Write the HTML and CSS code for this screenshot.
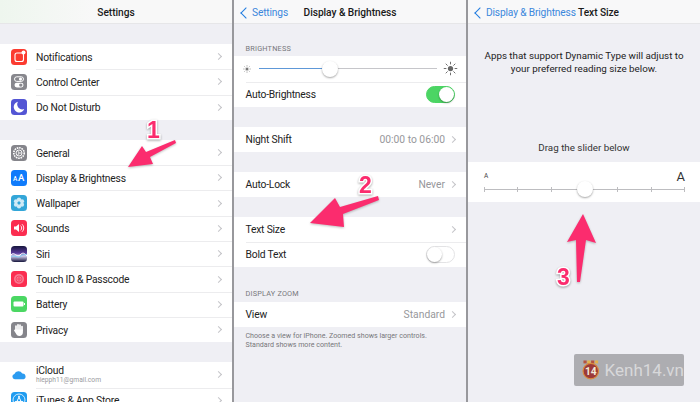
FILE: index.html
```html
<!DOCTYPE html>
<html lang="en">
<head>
	<title>Text Size</title>
	<meta charset="utf-8">
	<link rel="stylesheet" href="styles.css">
</head>
<body>

<!-- wrap -->
<div id="p_wrapper">

	<!-- settings -->
	<div class="screen">
		<div class="nav nav-tint"><span class="nav-title">Settings</span></div>
		<div class="gap"></div>
		<ul class="group">
			<li class="row"><svg class="ico" viewBox="0 0 16 16"><rect width="16" height="16" rx="3.5" fill="#fb3b30"/><rect x="4" y="4" width="8.5" height="8.5" rx="2" fill="none" stroke="#fff" stroke-width="1.1"/><circle cx="12.5" cy="3.6" r="2" fill="#fff"/></svg><span class="label">Notifications</span><i class="chev"></i></li>
			<li class="row"><svg class="ico" viewBox="0 0 16 16"><rect width="16" height="16" rx="3.5" fill="#87878d"/><rect x="3.5" y="2.8" width="9" height="4.6" rx="2.3" fill="none" stroke="#fff"/><circle cx="9.5" cy="5.1" r="1.6" fill="#fff"/><rect x="3.5" y="8.8" width="9" height="4.6" rx="2.3" fill="#fff"/><circle cx="9.8" cy="11.1" r="1.7" fill="#87878d"/></svg><span class="label">Control Center</span><i class="chev"></i></li>
			<li class="row"><svg class="ico" viewBox="0 0 16 16"><rect width="16" height="16" rx="3.5" fill="#5355d4"/><path d="M7 2.8A5.4 5.4 0 1 0 13.2 10 5 5 0 0 1 7 2.8Z" fill="#fff"/></svg><span class="label">Do Not Disturb</span><i class="chev"></i></li>
		</ul>
		<div class="gap"></div>
		<ul class="group">
			<li class="row"><svg class="ico" viewBox="0 0 16 16"><rect width="16" height="16" rx="3.5" fill="#85858b"/><circle cx="8" cy="8" r="5.2" fill="none" stroke="#fff" stroke-width="1.6" stroke-dasharray="1.6 .8"/><circle cx="8" cy="8" r="3" fill="none" stroke="#fff" stroke-width=".9"/><path d="M8 8 10.8 8M8 8 6.6 5.6M8 8 6.6 10.4" stroke="#fff" stroke-width=".8"/></svg><span class="label">General</span><i class="chev"></i></li>
			<li class="row"><svg class="ico" viewBox="0 0 16 16"><rect width="16" height="16" rx="3.5" fill="#0f7bfb"/><text class="ico-aa" x="2" y="11" font-size="6.5">A</text><text class="ico-aa" x="7" y="11" font-size="9.5">A</text></svg><span class="label">Display &amp; Brightness</span><i class="chev"></i></li>
			<li class="row"><svg class="ico" viewBox="0 0 16 16"><rect width="16" height="16" rx="3.5" fill="#33a6d8"/><g fill="#cfeaf6"><circle cx="8" cy="4.6" r="2.1"/><circle cx="8" cy="11.4" r="2.1"/><circle cx="5" cy="6.3" r="2.1"/><circle cx="11" cy="6.3" r="2.1"/><circle cx="5" cy="9.7" r="2.1"/><circle cx="11" cy="9.7" r="2.1"/></g><circle cx="8" cy="8" r="1.3" fill="#33a6d8"/></svg><span class="label">Wallpaper</span><i class="chev"></i></li>
			<li class="row"><svg class="ico" viewBox="0 0 16 16"><rect width="16" height="16" rx="3.5" fill="#fb2d50"/><path d="M3 6.4H5L8 4V12L5 9.6H3Z" fill="#fff"/><path d="M9.5 5.6A3 3 0 0 1 9.5 10.4M11 4.2A5 5 0 0 1 11 11.8" fill="none" stroke="#fff" stroke-width=".9"/></svg><span class="label">Sounds</span><i class="chev"></i></li>
			<li class="row"><svg class="ico" viewBox="0 0 16 16"><defs><linearGradient id="siriBg" x1="0" y1="0" x2="0" y2="1"><stop offset="0" stop-color="#15153c"/><stop offset=".45" stop-color="#5b3c9c"/><stop offset=".62" stop-color="#d9d2f2"/><stop offset="1" stop-color="#15153c"/></linearGradient></defs><rect width="16" height="16" rx="3.5" fill="url(#siriBg)"/><path d="M0 9C3 5 6 12 9 9S13 7 16 10" fill="none" stroke="#fff" stroke-width="1"/><path d="M0 11C4 8 6 13 10 10S14 10 16 8" fill="none" stroke="#7fd4f5" stroke-width="1"/></svg><span class="label">Siri</span><i class="chev"></i></li>
			<li class="row"><svg class="ico" viewBox="0 0 16 16"><rect width="16" height="16" rx="3.5" fill="#fb2d50"/><circle cx="8" cy="8" r="5" fill="#f77b92"/><circle cx="8" cy="8" r="3" fill="none" stroke="#fb2d50" stroke-width=".7"/><circle cx="8" cy="8" r="1.2" fill="none" stroke="#fb2d50" stroke-width=".7"/></svg><span class="label">Touch ID &amp; Passcode</span><i class="chev"></i></li>
			<li class="row"><svg class="ico" viewBox="0 0 16 16"><rect width="16" height="16" rx="3.5" fill="#4bd763"/><rect x="2.5" y="5.5" width="10" height="5" rx="1" fill="#fff"/><rect x="13" y="7" width="1" height="2" fill="#fff"/></svg><span class="label">Battery</span><i class="chev"></i></li>
			<li class="row"><svg class="ico" viewBox="0 0 16 16"><rect width="16" height="16" rx="3.5" fill="#85858b"/><path d="M5 8V4.2M7 7.5V2.8M9 7.5V3.2M11 8.5V4.5" stroke="#fff" stroke-width="1.7" stroke-linecap="round"/><path d="M4.2 7.5H11.9V10.5C11.9 12.8 10.5 14 8.4 14 6.4 14 5.6 12.8 4.6 11L3 8.6C3 8 3.8 7.5 4.2 7.5Z" fill="#fff"/></svg><span class="label">Privacy</span><i class="chev"></i></li>
		</ul>
		<div class="gap"></div>
		<ul class="group">
			<li class="row"><svg class="ico" viewBox="0 0 16 16"><path d="M3.8 12.2A2.7 2.7 0 0 1 3.4 6.9 4.4 4.4 0 0 1 11.3 6.4 3 3 0 0 1 12.6 12.2Z" fill="#2c9bf0"/></svg><div class="label"><div class="label-two">iCloud</div><div class="sub">hiepph11@gmail.com</div></div><i class="chev"></i></li>
			<li class="row"><svg class="ico" viewBox="0 0 16 16"><rect width="16" height="16" rx="3.5" fill="#1f9cf0"/><circle cx="8" cy="8" r="6" fill="none" stroke="#fff" stroke-width=".8"/><path d="M8.6 3.8 5 11.5M7.4 3.8 11 11.5M3.8 9.6H12.2" stroke="#fff" stroke-width="1"/></svg><span class="label">iTunes &amp; App Store</span><i class="chev"></i></li>
		</ul>
	</div>

	<div class="divider"></div>

	<!-- display & brightness -->
	<div class="screen">
		<div class="nav">
			<span class="back"><i class="back-arrow"></i>Settings</span>
			<span class="nav-title">Display &amp; Brightness</span>
		</div>
		<div class="group-head head-first">BRIGHTNESS</div>
		<ul class="group">
			<li class="row row-inset bright">
				<svg class="sun" viewBox="0 0 16 16"><circle cx="8" cy="8" r="2.4" fill="#777"/><path d="M8 2V4M8 12V14M2 8H4M12 8H14M3.8 3.8 5.2 5.2M10.8 10.8 12.2 12.2M3.8 12.2 5.2 10.8M10.8 5.2 12.2 3.8" stroke="#777" stroke-width="1"/></svg>
				<div class="track"><div class="track-on"></div><div class="track-off"></div><span class="thumb"></span></div>
				<svg class="sun sun-big" viewBox="0 0 16 16"><circle cx="8" cy="8" r="2.8" fill="#666"/><path d="M8 .8V3.6M8 12.4V15.2M.8 8H3.6M12.4 8H15.2M2.9 2.9 4.9 4.9M11.1 11.1 13.1 13.1M2.9 13.1 4.9 11.1M11.1 4.9 13.1 2.9" stroke="#666" stroke-width="1"/></svg>
			</li>
			<li class="row row-inset"><span class="label">Auto-Brightness</span><span class="switch switch-on"><span class="knob"></span></span></li>
		</ul>
		<div class="gap"></div>
		<ul class="group">
			<li class="row row-inset"><span class="label">Night Shift</span><span class="value">00:00 to 06:00</span><i class="chev"></i></li>
		</ul>
		<div class="gap"></div>
		<ul class="group">
			<li class="row row-inset"><span class="label">Auto-Lock</span><span class="value">Never</span><i class="chev"></i></li>
		</ul>
		<div class="gap"></div>
		<ul class="group">
			<li class="row row-inset"><span class="label">Text Size</span><i class="chev"></i></li>
			<li class="row row-inset"><span class="label">Bold Text</span><span class="switch"><span class="knob"></span></span></li>
		</ul>
		<div class="group-head head-zoom">DISPLAY ZOOM</div>
		<ul class="group">
			<li class="row row-inset"><span class="label">View</span><span class="value">Standard</span><i class="chev"></i></li>
		</ul>
		<p class="foot">Choose a view for iPhone. Zoomed shows larger controls.<br>Standard shows more content.</p>
	</div>

	<div class="divider"></div>

	<!-- text size -->
	<div class="screen">
		<div class="nav">
			<span class="back back-long"><i class="back-arrow"></i>Display &amp; Brightness</span>
			<span class="nav-title title-side">Text Size</span>
		</div>
		<p class="intro">Apps that support Dynamic Type will adjust to<br>your preferred reading size below.</p>
		<p class="drag">Drag the slider below</p>
		<div class="sizer">
			<div class="sizer-ends"><span class="a-small">A</span><span class="a-big">A</span></div>
			<div class="ticks">
				<i></i><i></i><i></i><i></i><i></i><i></i><i></i>
				<span class="thumb thumb-mid"></span>
			</div>
		</div>
	</div>

</div>
<!-- //wrap -->

<!-- arrows and numbers drawn over the screens -->
<svg class="arrows" viewBox="0 0 700 402">
	<path d="M128 167 142 146 146 152 175 140 176 143 150 157 153 164Z"/>
	<path d="M310 223 335 198 340 207 378 196 379 200 343 214 344 227Z"/>
	<path d="M583 214 596 243 586 240 580 282 577 282 576 240 567 242Z"/>
</svg>
<span class="num num-1">1</span>
<span class="num num-2">2</span>
<span class="num num-3">3</span>

<div class="mark">
	<svg class="mark-logo" viewBox="0 0 24 26">
		<g fill="#b5533f"><rect x="2" y="0" width="4.4" height="4"/><rect x="12.4" y="0" width="4.4" height="4"/></g>
		<g fill="#e3b34c"><rect x="7.2" y="0" width="4.4" height="4"/><rect x="17.6" y="0" width="4.4" height="4"/></g>
		<circle cx="12" cy="14.5" r="10.6" fill="#9c3a3a" stroke="#d98b3c" stroke-width="1.6"/>
		<text x="12" y="20" text-anchor="middle" class="mark-num">14</text>
	</svg>
	<span class="mark-text">Kenh14.vn</span>
</div>

</body>
</html>
```

FILE: styles.css
```css
*{padding: 0; margin:0; border: 0; box-sizing: border-box;}
html, body {width: 700px;height: 402px;overflow: hidden;}
body {position: relative;font-family: "Roboto", "Liberation Sans", sans-serif;color: #222;background: #efeff4;}
ul {list-style: none;}

#p_wrapper {display: flex;width: 700px;height: 402px;}
.screen {flex: 0 0 232px;height: 402px;overflow: hidden;background: #efeff4;}
.divider {flex: 0 0 2px;background: #98989c;}

.nav {display: flex;align-items: center;justify-content: center;position: relative;height: 24px;padding-top: 1px;background: #f8f8f9;border-bottom: 1px solid #e6e6e8;}
.nav-tint {background: linear-gradient(90deg, #eef6ee, #f8f8f8 40%);}
.nav-title {font-size: 10.2px;font-weight: 500;letter-spacing: -.05px;color: #1a1a1a;}
.title-side {margin-left: 29px;}
.back {position: absolute;left: 5px;top: 1px;display: flex;align-items: center;height: 23px;font-size: 10.2px;letter-spacing: -.15px;color: #3b87dc;}
.back-arrow {width: 8px;height: 8px;margin-right: 2px;margin-left: 3px;border-left: 1.7px solid #1f7be0;border-bottom: 1.7px solid #1f7be0;transform: rotate(45deg);}

.gap {height: 20px;}
.group {background: #fff;}
.row {display: flex;align-items: center;position: relative;height: 25.3px;padding-right: 10px;font-size: 10.3px;letter-spacing: -.2px;background: #fff;}
.row + .row:before {content: '';position: absolute;left: 36px;right: 0;top: 0;height: 1px;background: #ececee;}
.row-inset {height: 25px;padding-left: 11.5px;}
.row-inset + .row-inset:before {left: 12px;}

.ico {flex: 0 0 16px;width: 16px;height: 16px;margin: 0 9px 0 11px;}
.ico + .label {padding-top: 1px;}
.ico-aa {fill: #fff;font-family: "Roboto", sans-serif;font-weight: 500;}
.label {flex: 1;white-space: nowrap;}
.label-two {line-height: 11px;margin-top: -1px;}
.sub {font-size: 6.7px;line-height: 8px;letter-spacing: 0;color: #9a9a9e;}
.value {color: #97979b;margin-right: 5px;letter-spacing: 0;}
.chev {flex: 0 0 5px;width: 5px;height: 5px;margin-right: 1px;border-top: 1px solid #c4c4c8;border-right: 1px solid #c4c4c8;transform: rotate(45deg);}

.group-head {font-size: 7.3px;color: #77777b;padding-left: 11.5px;letter-spacing: .2px;}
.head-first {height: 32px;padding-top: 20px;}
.head-zoom {height: 35.5px;padding-top: 22px;}
.foot {padding: 3.5px 11.5px 0;font-size: 7.1px;line-height: 9px;color: #77777b;}

.row.bright {height: 25.5px;padding-right: 8px;padding-left: 8px;}
.sun {flex: 0 0 10px;width: 10px;height: 10px;}
.sun-big {flex: 0 0 15px;width: 15px;height: 15px;}
.track {flex: 1;display: flex;align-items: center;position: relative;height: 14px;margin: 0 6px 0 7px;}
.track-on {width: 36%;height: 1px;background: #5e98d8;}
.track-off {flex: 1;height: 1px;background: #c6c6ca;}
.thumb {position: absolute;left: 35.5%;top: -1px;width: 16px;height: 16px;border-radius: 50%;background: #fff;box-shadow: 0 1px 2px rgba(0,0,0,.35);}

.switch {display: block;position: relative;width: 29px;height: 17px;margin-right: 1px;border-radius: 9px;background: #fff;border: 1px solid #e3e3e5;}
.switch-on {background: #4cd564;border-color: #4cd564;}
.knob {position: absolute;left: 0;top: 0;width: 15px;height: 15px;border-radius: 50%;background: #fff;box-shadow: 0 1px 2px rgba(0,0,0,.35);}
.switch-on .knob {left: 12px;}

.intro {padding-top: 26px;font-size: 9.8px;line-height: 12.5px;text-align: center;color: #222;}
.drag {padding-top: 66px;font-size: 9.8px;line-height: 14px;text-align: center;color: #333;}
.sizer {height: 40px;margin-top: 7px;padding: 6px 15px 0 16px;background: #fff;}
.sizer-ends {display: flex;align-items: center;justify-content: space-between;height: 16px;}
.a-small {font-size: 6.5px;color: #444;}
.a-big {font-size: 13px;color: #333;}
.ticks {display: flex;justify-content: space-between;align-items: center;position: relative;height: 6px;margin-top: 2px;background: linear-gradient(#bdbdc0, #bdbdc0) no-repeat center / 100% 1px;}
.ticks i {display: block;width: 1px;height: 5px;background: #bdbdc0;}
.thumb-mid {left: calc(50% - 8px);top: -5px;}

.arrows {position: absolute;left: 0;top: 0;width: 700px;height: 402px;fill: #fb2c6e;filter: drop-shadow(0 1px 1px rgba(0,0,0,.25));}
.num {position: absolute;font-family: "Liberation Sans", sans-serif;font-size: 23px;font-weight: bold;line-height: 24px;color: #fb2c6e;-webkit-text-stroke: 3px #fff;paint-order: stroke fill;filter: drop-shadow(0 1px 1px rgba(0,0,0,.35));}
.num-1 {left: 147px;top: 118px;}
.num-2 {left: 359px;top: 173px;}
.num-3 {left: 557px;top: 265px;}

.mark {position: absolute;left: 574px;top: 354px;display: flex;align-items: center;width: 110px;height: 32px;padding-left: 8px;border-radius: 2px;background: #adadb1;}
.mark-logo {width: 22px;height: 24px;}
.mark-num {font-family: "Roboto", sans-serif;font-size: 14px;font-weight: 700;fill: #f4ead8;}
.mark-text {margin-left: 5px;font-family: "Roboto", sans-serif;font-size: 17px;color: #d8d8da;}
```
